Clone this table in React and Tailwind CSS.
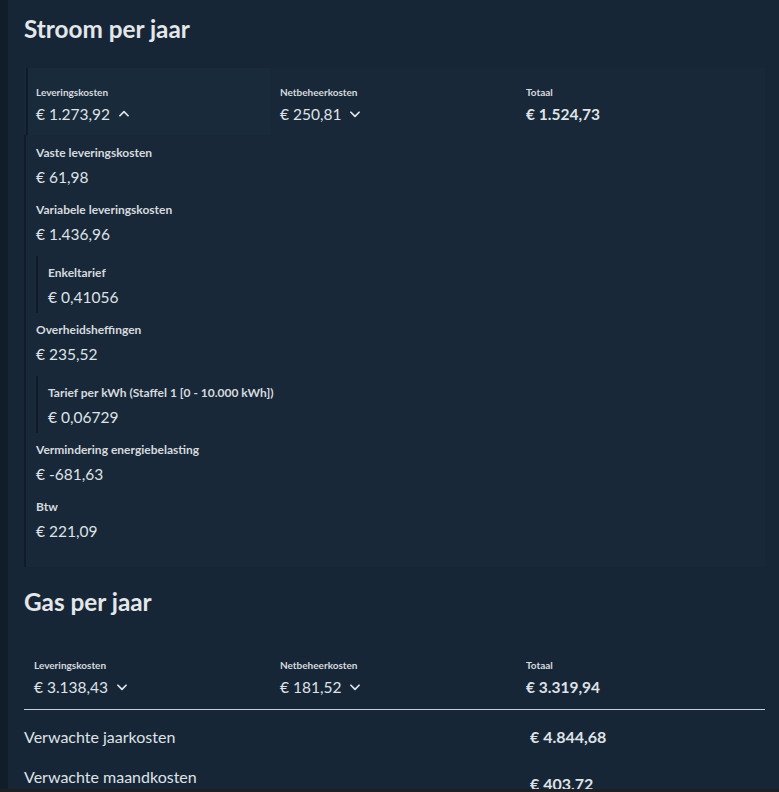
import React from "react";

const ChevronUp = () => (
  <svg width="14" height="14" viewBox="0 0 24 24" fill="none" stroke="currentColor" strokeWidth="3" strokeLinecap="round" strokeLinejoin="round">
    <path d="M5 15l7-7 7 7" />
  </svg>
);
const ChevronDown = () => (
  <svg width="14" height="14" viewBox="0 0 24 24" fill="none" stroke="currentColor" strokeWidth="3" strokeLinecap="round" strokeLinejoin="round">
    <path d="M5 9l7 7 7-7" />
  </svg>
);

function Cell({ label, value, icon, bold, pad = "pl-[10px]" }) {
  return (
    <div className={pad + " pt-[16px]"}>
      <div className="text-[10px] font-bold leading-[16px] text-[#d6dadf]">{label}</div>
      <div className={"mt-[3px] flex items-center gap-[7px] text-[15.5px] leading-[22px] text-[#dfe2e6] " + (bold ? "font-bold" : "")}>
        <span>{value}</span>
        {icon === "up" && <ChevronUp />}
        {icon === "down" && <ChevronDown />}
      </div>
    </div>
  );
}

function Entry({ label, value, children, last }) {
  return (
    <div className={children ? "mb-[9px]" : last ? "" : "mb-[14px]"}>
      <div className="text-[12px] font-bold leading-[16px] text-[#d6dadf]">{label}</div>
      <div className="mt-[5px] text-[15.5px] leading-[22px] text-[#dfe2e6]">{value}</div>
      {children}
    </div>
  );
}

function Nested({ label, value }) {
  return (
    <div className="mt-[11px] border-l-2 border-[#0f1b27] pl-[10px] pt-[9px] pb-[5px]">
      <div className="text-[12px] font-bold leading-[16px] text-[#d6dadf]">{label}</div>
      <div className="mt-[5px] text-[15.5px] leading-[22px] text-[#dfe2e6]">{value}</div>
    </div>
  );
}

export default function App() {
  return (
    <div
      className="relative flex h-[792px] w-[779px] overflow-hidden bg-[#172637] text-[#e1e4e8]"
      style={{ fontFamily: "Lato, 'Noto Sans', sans-serif" }}
    >
      <div className="w-[8px] shrink-0 bg-[#111d29]" />
      <div className="flex-1 pl-[16px] pr-[14px]">
        {/* Stroom */}
        <h2 className="pt-[14px] text-[24.3px] font-bold leading-[30px] text-[#e4e7ea]">Stroom per jaar</h2>
        <div className="mt-[24px] bg-[#182839]">
          <div className="grid h-[67px] grid-cols-[246px_246px_1fr]">
            <div className="ml-[2px] border-l-2 border-[#0f1b27] bg-[#192a3b]">
              <Cell label="Leveringskosten" value="€ 1.273,92" icon="up" pad="pl-[8px]" />
            </div>
            <Cell label="Netbeheerkosten" value="€ 250,81" icon="down" />
            <Cell label="Totaal" value="€ 1.524,73" bold />
          </div>
          <div className="border-l-2 border-[#0f1b27] pl-[10px] pt-[10px] pb-[25px]">
            <Entry label="Vaste leveringskosten" value="€ 61,98" />
            <Entry label="Variabele leveringskosten" value="€ 1.436,96">
              <Nested label="Enkeltarief" value="€ 0,41056" />
            </Entry>
            <Entry label="Overheidsheffingen" value="€ 235,52">
              <Nested label="Tarief per kWh (Staffel 1 [0 - 10.000 kWh])" value="€ 0,06729" />
            </Entry>
            <Entry label="Vermindering energiebelasting" value="€ -681,63" />
            <Entry label="Btw" value="€ 221,09" last />
          </div>
        </div>

        {/* Gas */}
        <h2 className="pt-[20px] text-[24.3px] font-bold leading-[30px] text-[#e4e7ea]">Gas per jaar</h2>
        <div className="mt-[24px] grid h-[69px] grid-cols-[246px_246px_1fr] border-b border-[#c9ced4]">
          <Cell label="Leveringskosten" value="€ 3.138,43" icon="down" />
          <Cell label="Netbeheerkosten" value="€ 181,52" icon="down" />
          <Cell label="Totaal" value="€ 3.319,94" bold />
        </div>

        <div className="grid grid-cols-[492px_1fr] pt-[15px] text-[16px] leading-[24px] text-[#dfe2e6]">
          <div>Verwachte jaarkosten</div>
          <div className="pl-[14px] font-bold">€ 4.844,68</div>
        </div>
        <div className="grid grid-cols-[492px_1fr] pt-[16px] text-[16px] leading-[24px] text-[#dfe2e6]">
          <div>Verwachte maandkosten</div>
          <div className="pl-[14px] pt-[7px] font-bold">€ 403,72</div>
        </div>
      </div>
      <div className="absolute bottom-0 left-0 h-[3px] w-full bg-[#1c1f23]" />
    </div>
  );
}
